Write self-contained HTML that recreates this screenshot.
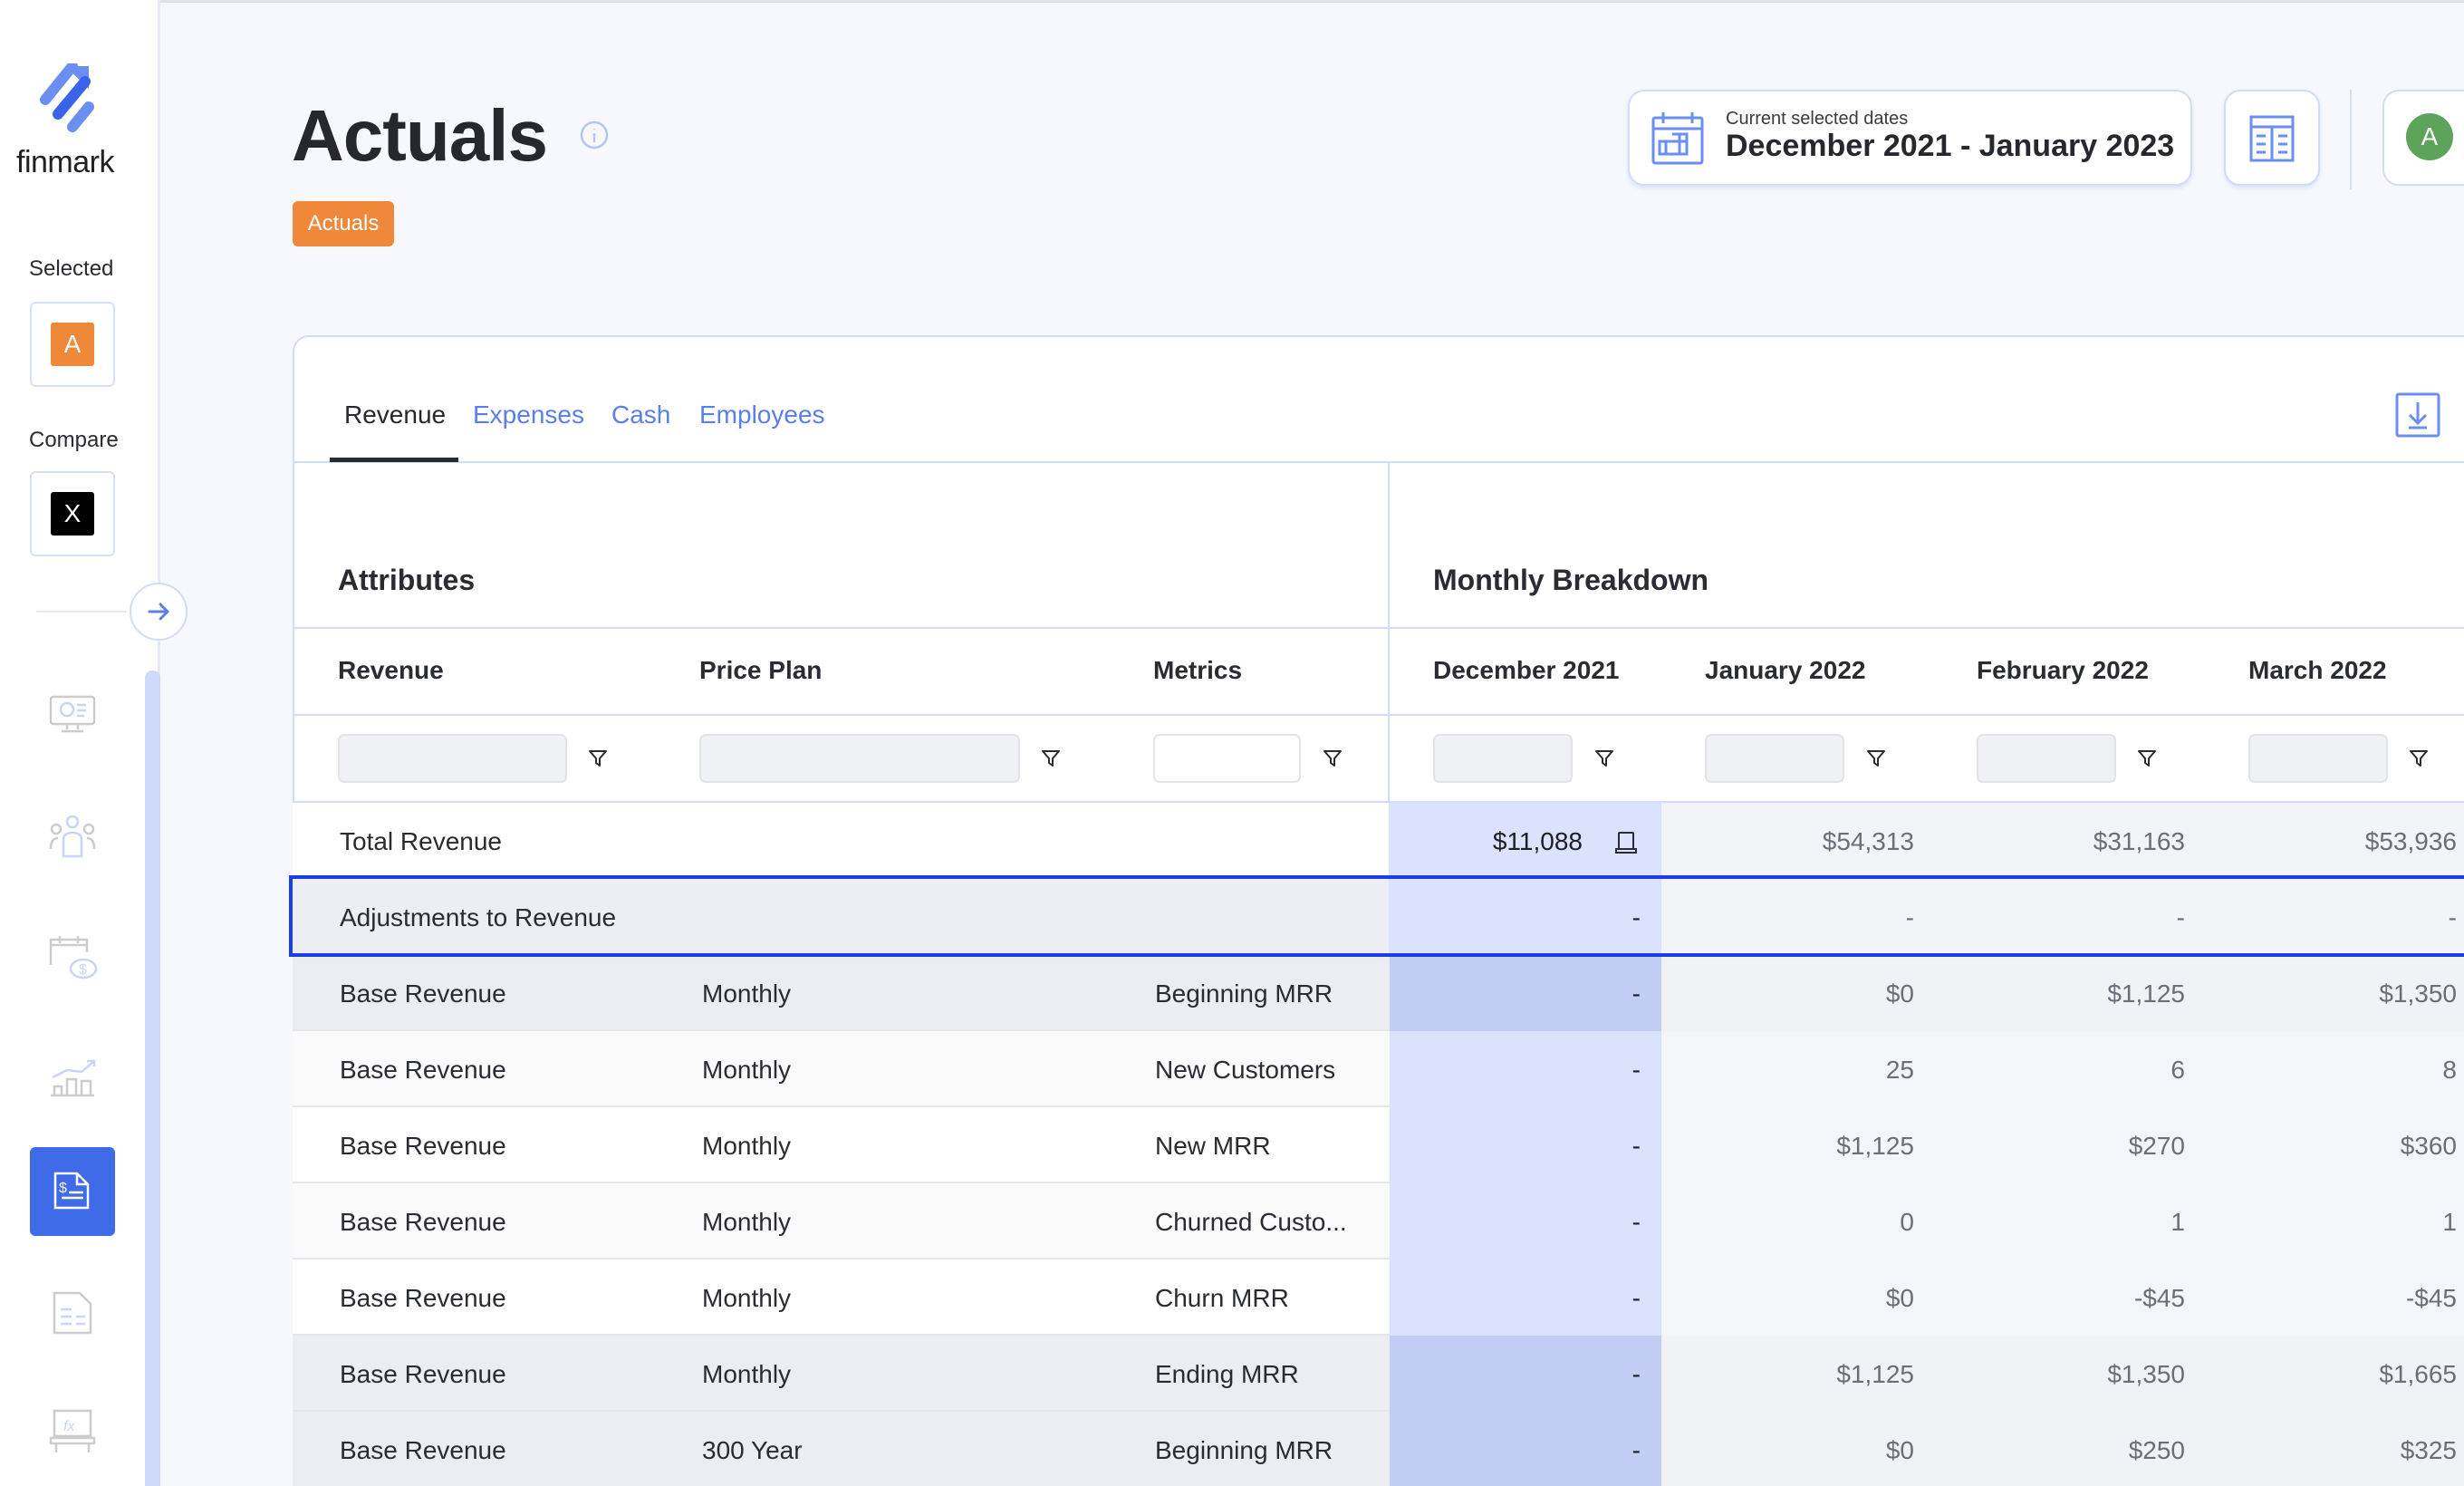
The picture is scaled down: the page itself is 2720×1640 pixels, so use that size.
<!DOCTYPE html>
<html><head><meta charset="utf-8"><style>
*{margin:0;padding:0;box-sizing:border-box}
html,body{width:2720px;height:1640px;overflow:hidden}
body{background:#f7f8fd;font-family:"Liberation Sans",sans-serif;color:#2a2b33}
#w{position:relative;width:2720px;height:1640px;overflow:hidden}
.a{position:absolute}
.side{left:0;top:0;width:177px;height:1640px;background:#fff;border-right:3px solid #e4e9f8}
.lbl{font-size:24px;color:#2a2b33}
.box{width:94px;height:94px;border:2px solid #d6e0f8;border-radius:6px;background:#fff}
.ic{left:52px;width:56px;height:56px}
.t{font-size:28px;white-space:nowrap}
.hd{font-size:28px;font-weight:bold;white-space:nowrap}
.inp{height:54px;border:2px solid #e3e4e8;border-radius:7px;background:#f0f1f4}
.row{left:323px;width:2397px;height:84px;border-bottom:2px solid #e4e6eb}
.row .t{position:absolute;top:27px}
.v{position:absolute;top:27px;font-size:28px;text-align:right;color:#6b6e76}
</style></head><body><div id="w">
<div class="a" style="left:0;top:0;width:2720px;height:3px;background:#dfe1e6"></div>
<div class="a side"></div>
<svg class="a" style="left:40px;top:70px" width="80" height="90" viewBox="0 0 80 90">
<path d="M10 40 L40 3" stroke="#6b8ff0" stroke-width="12" stroke-linecap="round"/>
<path d="M32 3 L58 3 L58 28 Z" fill="#6b8ff0"/>
<path d="M24 56 L54 20" stroke="#3b63e8" stroke-width="12" stroke-linecap="round"/>
<path d="M40 70 L58 48" stroke="#6b8ff0" stroke-width="12" stroke-linecap="round"/>
</svg>
<div class="a" style="left:18px;top:160px;font-size:34px;color:#222;letter-spacing:-0.5px">finmark</div>
<div class="a lbl" style="left:32px;top:283px">Selected</div>
<div class="a box" style="left:33px;top:333px"></div>
<div class="a" style="left:56px;top:356px;width:48px;height:48px;background:#f0883a;border-radius:3px;color:#fff;font-size:28px;text-align:center;line-height:48px">A</div>
<div class="a lbl" style="left:32px;top:472px">Compare</div>
<div class="a box" style="left:33px;top:520px"></div>
<div class="a" style="left:56px;top:543px;width:48px;height:48px;background:#000;border-radius:3px;color:#fff;font-size:28px;text-align:center;line-height:48px">X</div>
<div class="a" style="left:40px;top:674px;width:100px;height:2px;background:#e6eaf5"></div>
<div class="a" style="left:143px;top:643px;width:64px;height:64px;border:2px solid #d0dcf8;border-radius:50%;background:#fff"></div>
<svg class="a" style="left:159px;top:659px" width="32" height="32" viewBox="0 0 32 32"><path d="M6 16H26M18 8L26 16L18 24" stroke="#5b7fea" stroke-width="3" fill="none" stroke-linecap="round" stroke-linejoin="round"/></svg>
<div class="a" style="left:160px;top:740px;width:17px;height:900px;background:#cfdafa;border-radius:8px 8px 0 0"></div>
<svg class="a ic" style="top:763px" viewBox="0 0 56 56" fill="none" stroke-width="2.5"><rect x="4" y="6" width="48" height="30" rx="3" stroke="#ccc"/><path d="M22 36v6M34 36v6M16 44h24" stroke="#ccc"/><circle cx="22" cy="20" r="7" stroke="#c8d5f8"/><path d="M33 15h10M33 21h10M33 27h8" stroke="#c8d5f8"/></svg>
<svg class="a ic" style="top:897px" viewBox="0 0 56 56" fill="none" stroke-width="2.5" stroke="#ccc"><circle cx="28" cy="10" r="6" stroke="#c8d5f8"/><circle cx="10" cy="18" r="5"/><circle cx="46" cy="18" r="5"/><path d="M18 48V30q0-8 10-8t10 8v18z" stroke="#c8d5f8"/><path d="M4 40q0-12 8-12M52 40q0-12-8-12"/></svg>
<svg class="a ic" style="top:1025px" viewBox="0 0 56 56" fill="none" stroke-width="2.5"><path d="M4 40V12h40v14M4 18h40M14 8v8M34 8v8" stroke="#ccc"/><ellipse cx="40" cy="44" rx="14" ry="10" stroke="#c8d5f8"/><text x="35" y="50" font-size="16" fill="#c8d5f8" stroke="none">$</text></svg>
<svg class="a ic" style="top:1159px" viewBox="0 0 56 56" fill="none" stroke-width="2.5"><path d="M4 50h48M8 50V40h8v10M22 50V32h10v18M38 50V34h10v16" stroke="#ccc"/><path d="M6 30L22 22L38 24L52 12M44 12h8v6" stroke="#c8d5f8"/></svg>
<div class="a" style="left:33px;top:1266px;width:94px;height:98px;background:#3f6ae8;border-radius:6px"></div>
<svg class="a" style="left:58px;top:1292px" width="44" height="46" viewBox="0 0 44 46" fill="none" stroke="#fff" stroke-width="2.5"><path d="M3 3h24l12 12v26H3z"/><path d="M27 3v12h12M10 30h24M18 24h16"/><text x="7" y="24" font-size="16" fill="#fff" stroke="none">$</text></svg>
<svg class="a ic" style="top:1421px" viewBox="0 0 56 56" fill="none" stroke-width="2.5"><path d="M8 6h28l12 12v32H8z" stroke="#ccc"/><path d="M15 24h12M15 32h12M15 40h12M32 32h10M32 40h10" stroke="#c8d5f8"/></svg>
<svg class="a ic" style="top:1551px" viewBox="0 0 56 56" fill="none" stroke-width="2.5"><rect x="8" y="6" width="40" height="28" stroke="#ccc"/><path d="M4 36h48v6H4zM10 42v10M46 42v10" stroke="#ccc"/><text x="18" y="28" font-size="16" font-style="italic" fill="#c8d5f8" stroke="none">fx</text></svg>

<div class="a" style="left:322px;top:104px;font-size:80px;font-weight:bold;color:#27282f;letter-spacing:-1px">Actuals</div>
<svg class="a" style="left:639px;top:132px" width="34" height="34" viewBox="0 0 34 34" fill="none" stroke="#b3c5f5" stroke-width="2.5"><circle cx="17" cy="17" r="14"/><path d="M17 15v10M17 10v1"/></svg>
<div class="a" style="left:323px;top:222px;width:112px;height:50px;background:#f0883a;border-radius:6px;color:#fff;font-size:24px;text-align:center;line-height:50px">Actuals</div>

<div class="a" style="left:1797px;top:99px;width:623px;height:106px;background:#fff;border:2px solid #d0dcf8;border-radius:18px;box-shadow:0 3px 5px rgba(180,195,240,.4)"></div>
<svg class="a" style="left:1820px;top:120px" width="64" height="64" viewBox="0 0 64 64" fill="none" stroke="#6b8ff0" stroke-width="3"><rect x="5" y="10" width="54" height="50" rx="2"/><path d="M5 22h54M16 4v12M48 4v12"/><path d="M12 36h30v14H12zM26 28h16v22M19 36v14M34 28v22"/></svg>
<div class="a" style="left:1905px;top:120px;font-size:20px;color:#3a3b42">Current selected dates</div>
<div class="a" style="left:1905px;top:142px;font-size:34px;font-weight:bold;color:#27282f">December 2021 - January 2023</div>
<div class="a" style="left:2455px;top:99px;width:106px;height:106px;background:#fff;border:2px solid #d0dcf8;border-radius:18px;box-shadow:0 3px 5px rgba(180,195,240,.4)"></div>
<svg class="a" style="left:2482px;top:126px" width="52" height="54" viewBox="0 0 52 54" fill="none" stroke="#6b8ff0" stroke-width="3"><rect x="3" y="3" width="46" height="48"/><path d="M3 14h46M26 14v37M9 24h10M9 33h10M9 42h10M33 24h10M33 33h10M33 42h10"/></svg>
<div class="a" style="left:2594px;top:99px;width:2px;height:110px;background:#d6e0f8"></div>
<div class="a" style="left:2630px;top:99px;width:120px;height:106px;background:#fff;border:2px solid #d0dcf8;border-radius:18px"></div>
<div class="a" style="left:2656px;top:125px;width:52px;height:52px;background:#5ea35a;border-radius:50%;color:#fff;font-size:28px;text-align:center;line-height:52px">A</div>

<div class="a" style="left:323px;top:370px;width:2420px;height:1290px;background:#fff;border:2px solid #d0dcf8;border-radius:18px 0 0 0"></div>
<div class="a t" style="left:380px;top:442px;color:#27282f">Revenue</div>
<div class="a t" style="left:522px;top:442px;color:#5b7fea">Expenses</div>
<div class="a t" style="left:675px;top:442px;color:#5b7fea">Cash</div>
<div class="a t" style="left:772px;top:442px;color:#5b7fea">Employees</div>
<div class="a" style="left:325px;top:509px;width:2400px;height:2px;background:#d0dcf8"></div>
<div class="a" style="left:364px;top:505px;width:142px;height:5px;background:#2a2b33"></div>
<svg class="a" style="left:2643px;top:432px" width="52" height="52" viewBox="0 0 52 52" fill="none" stroke="#6b8ff0" stroke-width="3"><rect x="3" y="3" width="46" height="46" rx="2"/><path d="M26 12v22M17 26l9 9 9-9M16 40h20"/></svg>

<div class="a" style="left:1532px;top:511px;width:2px;height:1130px;background:#d0dcf8"></div>
<div class="a hd" style="left:373px;top:622px;font-size:32px">Attributes</div>
<div class="a hd" style="left:1582px;top:622px;font-size:32px">Monthly Breakdown</div>
<div class="a" style="left:325px;top:692px;width:2400px;height:2px;background:#d0dcf8"></div>
<div class="a hd" style="left:373px;top:724px">Revenue</div>
<div class="a hd" style="left:772px;top:724px">Price Plan</div>
<div class="a hd" style="left:1273px;top:724px">Metrics</div>
<div class="a hd" style="left:1582px;top:724px">December 2021</div>
<div class="a hd" style="left:1882px;top:724px">January 2022</div>
<div class="a hd" style="left:2182px;top:724px">February 2022</div>
<div class="a hd" style="left:2482px;top:724px">March 2022</div>
<div class="a" style="left:325px;top:788px;width:2400px;height:2px;background:#d0dcf8"></div>
<div class="a inp" style="left:373px;top:810px;width:253px"></div>
<div class="a inp" style="left:772px;top:810px;width:354px"></div>
<div class="a inp" style="left:1273px;top:810px;width:163px;background:#fff"></div>
<div class="a inp" style="left:1582px;top:810px;width:154px"></div>
<div class="a inp" style="left:1882px;top:810px;width:154px"></div>
<div class="a inp" style="left:2182px;top:810px;width:154px"></div>
<div class="a inp" style="left:2482px;top:810px;width:154px"></div>
<svg width="0" height="0" style="position:absolute"><defs><symbol id="f" viewBox="0 0 24 24"><path d="M3 4h18l-7 8v8l-4-3v-5z" fill="none" stroke="#2a2b33" stroke-width="2" stroke-linejoin="round"/></symbol></defs></svg>
<svg class="a" style="left:648px;top:825px" width="24" height="24"><use href="#f"/></svg>
<svg class="a" style="left:1148px;top:825px" width="24" height="24"><use href="#f"/></svg>
<svg class="a" style="left:1459px;top:825px" width="24" height="24"><use href="#f"/></svg>
<svg class="a" style="left:1759px;top:825px" width="24" height="24"><use href="#f"/></svg>
<svg class="a" style="left:2059px;top:825px" width="24" height="24"><use href="#f"/></svg>
<svg class="a" style="left:2358px;top:825px" width="24" height="24"><use href="#f"/></svg>
<svg class="a" style="left:2658px;top:825px" width="24" height="24"><use href="#f"/></svg>
<div class="a" style="left:325px;top:884px;width:2400px;height:2px;background:#d0dcf8"></div>

<div class="a" style="left:0;top:886px">
<div class="a row" style="top:0;background:#fff"><div class="a" style="left:1210px;top:0;width:301px;height:84px;background:#dae3fb"></div><div class="a" style="left:1511px;top:0;width:900px;height:84px;background:#f3f4f8"></div>
<span class="t" style="left:52px">Total Revenue</span>
<span class="v" style="left:1250px;width:174px;color:#1e1f25">$11,088</span>
<svg class="a" style="left:1458px;top:30px" width="28" height="28" viewBox="0 0 28 28" fill="none" stroke="#2a2b33" stroke-width="2"><rect x="6" y="3" width="16" height="18" rx="1"/><path d="M3 21h22v4H3z"/></svg>
<span class="v" style="left:1600px;width:190px">$54,313</span><span class="v" style="left:1900px;width:189px">$31,163</span><span class="v" style="left:2200px;width:189px">$53,936</span></div>

<div class="a row" style="top:84px;background:#eceef3"><div class="a" style="left:1210px;top:0;width:301px;height:84px;background:#dae3fb"></div><div class="a" style="left:1511px;top:0;width:900px;height:84px;background:#f3f4f8"></div>
<span class="t" style="left:52px">Adjustments to Revenue</span>
<span class="v" style="left:1250px;width:238px;color:#1e1f25">-</span><span class="v" style="left:1600px;width:190px">-</span><span class="v" style="left:1900px;width:189px">-</span><span class="v" style="left:2200px;width:189px">-</span></div>

<div class="a row" style="top:168px;background:#ebedf2"><div class="a" style="left:1211px;top:0;width:300px;height:84px;background:#c1cdf2"></div><div class="a" style="left:1511px;top:0;width:900px;height:84px;background:#f1f2f6"></div>
<span class="t" style="left:52px">Base Revenue</span><span class="t" style="left:452px">Monthly</span><span class="t" style="left:952px">Beginning MRR</span>
<span class="v" style="left:1250px;width:238px;color:#1e1f25">-</span><span class="v" style="left:1600px;width:190px">$0</span><span class="v" style="left:1900px;width:189px">$1,125</span><span class="v" style="left:2200px;width:189px">$1,350</span></div>

<div class="a row" style="top:252px;background:#fafafb"><div class="a" style="left:1211px;top:0;width:300px;height:84px;background:#dae3fb"></div><div class="a" style="left:1511px;top:0;width:900px;height:84px;background:#f4f5f8"></div>
<span class="t" style="left:52px">Base Revenue</span><span class="t" style="left:452px">Monthly</span><span class="t" style="left:952px">New Customers</span>
<span class="v" style="left:1250px;width:238px;color:#1e1f25">-</span><span class="v" style="left:1600px;width:190px">25</span><span class="v" style="left:1900px;width:189px">6</span><span class="v" style="left:2200px;width:189px">8</span></div>

<div class="a row" style="top:336px;background:#fff"><div class="a" style="left:1211px;top:0;width:300px;height:84px;background:#dae3fb"></div><div class="a" style="left:1511px;top:0;width:900px;height:84px;background:#f4f5f8"></div>
<span class="t" style="left:52px">Base Revenue</span><span class="t" style="left:452px">Monthly</span><span class="t" style="left:952px">New MRR</span>
<span class="v" style="left:1250px;width:238px;color:#1e1f25">-</span><span class="v" style="left:1600px;width:190px">$1,125</span><span class="v" style="left:1900px;width:189px">$270</span><span class="v" style="left:2200px;width:189px">$360</span></div>

<div class="a row" style="top:420px;background:#fafafb"><div class="a" style="left:1211px;top:0;width:300px;height:84px;background:#dae3fb"></div><div class="a" style="left:1511px;top:0;width:900px;height:84px;background:#f4f5f8"></div>
<span class="t" style="left:52px">Base Revenue</span><span class="t" style="left:452px">Monthly</span><span class="t" style="left:952px">Churned Custo...</span>
<span class="v" style="left:1250px;width:238px;color:#1e1f25">-</span><span class="v" style="left:1600px;width:190px">0</span><span class="v" style="left:1900px;width:189px">1</span><span class="v" style="left:2200px;width:189px">1</span></div>

<div class="a row" style="top:504px;background:#fff"><div class="a" style="left:1211px;top:0;width:300px;height:84px;background:#dae3fb"></div><div class="a" style="left:1511px;top:0;width:900px;height:84px;background:#f4f5f8"></div>
<span class="t" style="left:52px">Base Revenue</span><span class="t" style="left:452px">Monthly</span><span class="t" style="left:952px">Churn MRR</span>
<span class="v" style="left:1250px;width:238px;color:#1e1f25">-</span><span class="v" style="left:1600px;width:190px">$0</span><span class="v" style="left:1900px;width:189px">-$45</span><span class="v" style="left:2200px;width:189px">-$45</span></div>

<div class="a row" style="top:588px;background:#ebedf2"><div class="a" style="left:1211px;top:0;width:300px;height:84px;background:#c1cdf2"></div><div class="a" style="left:1511px;top:0;width:900px;height:84px;background:#f1f2f6"></div>
<span class="t" style="left:52px">Base Revenue</span><span class="t" style="left:452px">Monthly</span><span class="t" style="left:952px">Ending MRR</span>
<span class="v" style="left:1250px;width:238px;color:#1e1f25">-</span><span class="v" style="left:1600px;width:190px">$1,125</span><span class="v" style="left:1900px;width:189px">$1,350</span><span class="v" style="left:2200px;width:189px">$1,665</span></div>

<div class="a row" style="top:672px;background:#ebedf2"><div class="a" style="left:1211px;top:0;width:300px;height:84px;background:#c1cdf2"></div><div class="a" style="left:1511px;top:0;width:900px;height:84px;background:#f1f2f6"></div>
<span class="t" style="left:52px">Base Revenue</span><span class="t" style="left:452px">300 Year</span><span class="t" style="left:952px">Beginning MRR</span>
<span class="v" style="left:1250px;width:238px;color:#1e1f25">-</span><span class="v" style="left:1600px;width:190px">$0</span><span class="v" style="left:1900px;width:189px">$250</span><span class="v" style="left:2200px;width:189px">$325</span></div>
</div>
<div class="a" style="left:319px;top:966px;width:2405px;height:90px;border:4px solid #1a3de8"></div>
</div></body></html>
